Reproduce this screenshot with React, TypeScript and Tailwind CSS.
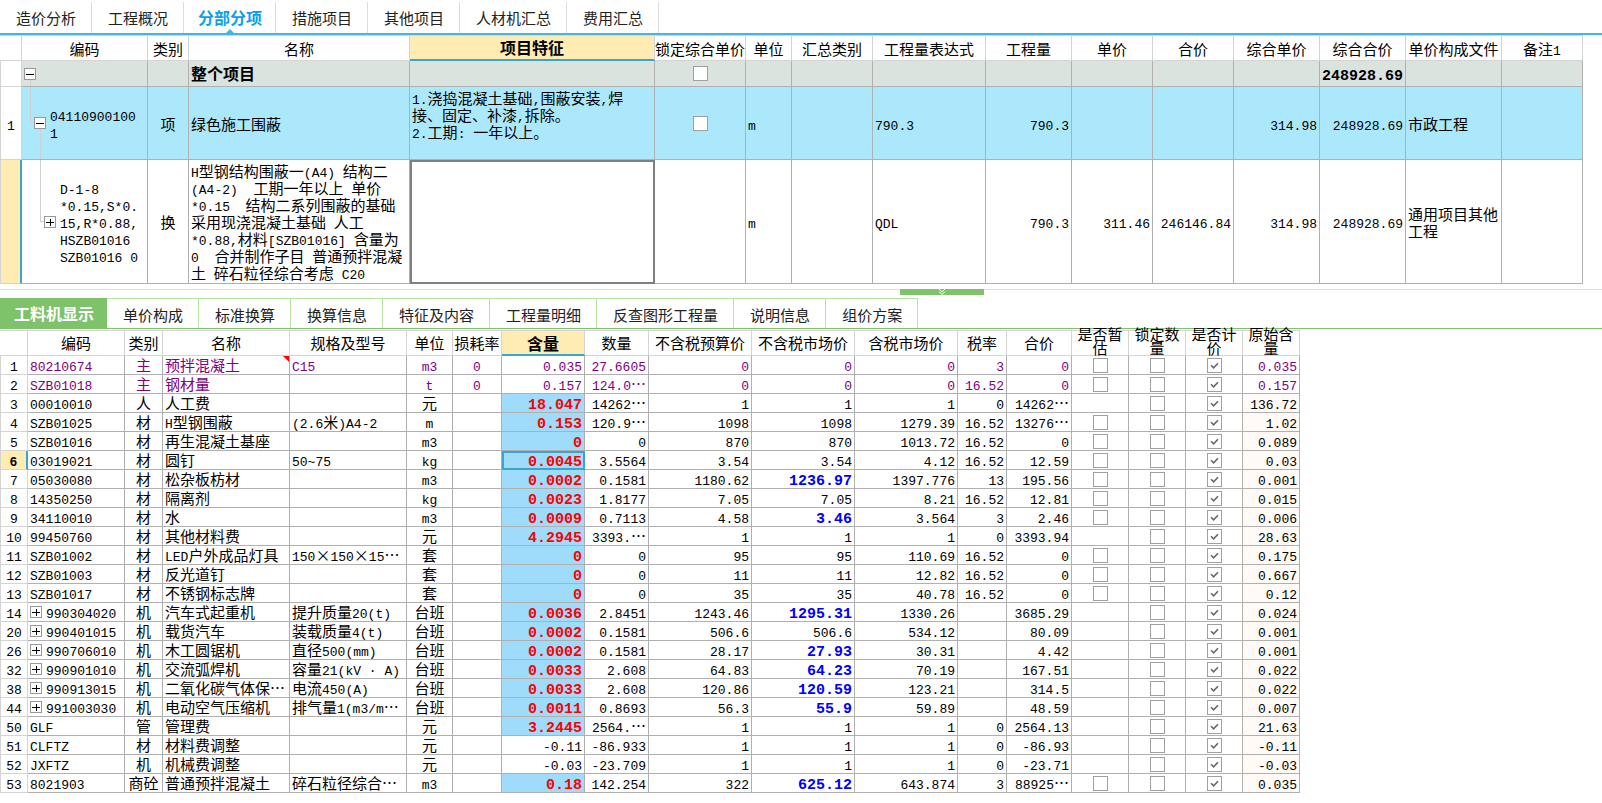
import React from 'react'
import clsx from 'clsx'

interface BillRow {
  code: string
  unit: string
  expression: string
  quantity: string
  unitPrice: string
  total: string
  compositePrice: string
  compositeTotal: string
  priceFile: string
}

interface MaterialRow {
  no: number
  code: string
  type: string
  name: string
  spec: string
  unit: string
  loss: string
  content: string
  quantity: string
  budgetPrice: string
  marketPrice: string
  taxedPrice: string
  taxRate: string
  total: string
  original: string
}

const topTabs = ['造价分析', '工程概况', '分部分项', '措施项目', '其他项目', '人材机汇总', '费用汇总']
const bottomTabs = ['工料机显示', '单价构成', '标准换算', '换算信息', '特征及内容', '工程量明细', '反查图形工程量', '说明信息', '组价方案']

const billHeaders = ['', '编码', '类别', '名称', '项目特征', '锁定综合单价', '单位', '汇总类别', '工程量表达式', '工程量', '单价', '合价', '综合单价', '综合合价', '单价构成文件', '备注1']
const billCols = ['w-[22px]', 'w-[126px]', 'w-[41px]', 'w-[221px]', 'w-[245px]', 'w-[91px]', 'w-[46px]', 'w-[81px]', 'w-[113px]', 'w-[86px]', 'w-[81px]', 'w-[81px]', 'w-[86px]', 'w-[86px]', 'w-[96px]', 'w-[81px]']

const materialHeaders = ['', '编码', '类别', '名称', '规格及型号', '单位', '损耗率', '含量', '数量', '不含税预算价', '不含税市场价', '含税市场价', '税率', '合价', '是否暂估', '锁定数量', '是否计价', '原始含量']
const materialCols = ['w-[28px]', 'w-[97px]', 'w-[38px]', 'w-[127px]', 'w-[117px]', 'w-[46px]', 'w-[49px]', 'w-[83px]', 'w-[64px]', 'w-[103px]', 'w-[103px]', 'w-[103px]', 'w-[49px]', 'w-[65px]', 'w-[57px]', 'w-[57px]', 'w-[57px]', 'w-[57px]']

const item: BillRow = {
  code: '04110900100\n1',
  unit: 'm',
  expression: '790.3',
  quantity: '790.3',
  unitPrice: '',
  total: '',
  compositePrice: '314.98',
  compositeTotal: '248928.69',
  priceFile: '市政工程',
}

const subItem: BillRow = {
  code: 'D-1-8\n*0.15,S*0.\n15,R*0.88,\nHSZB01016\nSZB01016 0',
  unit: 'm',
  expression: 'QDL',
  quantity: '790.3',
  unitPrice: '311.46',
  total: '246146.84',
  compositePrice: '314.98',
  compositeTotal: '248928.69',
  priceFile: '通用项目其他\n工程',
}

const featureText = '1.浇捣混凝土基础,围蔽安装,焊\n接、固定、补漆,拆除。\n2.工期: 一年以上。'
const subItemName =
  'H型钢结构围蔽一(A4) 结构二\n(A4-2)  工期一年以上 单价\n*0.15  结构二系列围蔽的基础\n采用现浇混凝土基础 人工\n*0.88,材料[SZB01016] 含量为\n0  合并制作子目 普通预拌混凝\n土 碎石粒径综合考虑 C20'

// no | code | type | name | spec | unit | loss | content | quantity | budget | market | taxed | rate | total | original
const source = `1|80210674|主|预拌混凝土|C15|m3|0|0.035|27.6605|0|0|0|3|0|0.035
2|SZB01018|主|钢材量||t|0|0.157|124.0…|0|0|0|16.52|0|0.157
3|00010010|人|人工费||元||18.047|14262…|1|1|1|0|14262…|136.72
4|SZB01025|材|H型钢围蔽|(2.6米)A4-2|m||0.153|120.9…|1098|1098|1279.39|16.52|13276…|1.02
5|SZB01016|材|再生混凝土基座||m3||0|0|870|870|1013.72|16.52|0|0.089
6|03019021|材|圆钉|50~75|kg||0.0045|3.5564|3.54|3.54|4.12|16.52|12.59|0.03
7|05030080|材|松杂板枋材||m3||0.0002|0.1581|1180.62|1236.97|1397.776|13|195.56|0.001
8|14350250|材|隔离剂||kg||0.0023|1.8177|7.05|7.05|8.21|16.52|12.81|0.015
9|34110010|材|水||m3||0.0009|0.7113|4.58|3.46|3.564|3|2.46|0.006
10|99450760|材|其他材料费||元||4.2945|3393.…|1|1|1|0|3393.94|28.63
11|SZB01002|材|LED户外成品灯具|150×150×15…|套||0|0|95|95|110.69|16.52|0|0.175
12|SZB01003|材|反光道钉||套||0|0|11|11|12.82|16.52|0|0.667
13|SZB01017|材|不锈钢标志牌||套||0|0|35|35|40.78|16.52|0|0.12
14|990304020|机|汽车式起重机|提升质量20(t)|台班||0.0036|2.8451|1243.46|1295.31|1330.26||3685.29|0.024
20|990401015|机|载货汽车|装载质量4(t)|台班||0.0002|0.1581|506.6|506.6|534.12||80.09|0.001
26|990706010|机|木工圆锯机|直径500(mm)|台班||0.0002|0.1581|28.17|27.93|30.31||4.42|0.001
32|990901010|机|交流弧焊机|容量21(kV · A)|台班||0.0033|2.608|64.83|64.23|70.19||167.51|0.022
38|990913015|机|二氧化碳气体保…|电流450(A)|台班||0.0033|2.608|120.86|120.59|123.21||314.5|0.022
44|991003030|机|电动空气压缩机|排气量1(m3/m…|台班||0.0011|0.8693|56.3|55.9|59.89||48.59|0.007
50|GLF|管|管理费||元||3.2445|2564.…|1|1|1|0|2564.13|21.63
51|CLFTZ|材|材料费调整||元||-0.11|-86.933|1|1|1|0|-86.93|-0.11
52|JXFTZ|机|机械费调整||元||-0.03|-23.709|1|1|1|0|-23.71|-0.03
53|8021903|商砼|普通预拌混凝土|碎石粒径综合…|m3||0.18|142.254|322|625.12|643.874|3|88925…|0.035`

const materials: MaterialRow[] = source.split('\n').map((line) => {
  const [no, code, type, name, spec, unit, loss, content, quantity, budgetPrice, marketPrice, taxedPrice, taxRate, total, original] = line.split('|')
  return { no: Number(no), code, type, name, spec, unit, loss, content, quantity, budgetPrice, marketPrice, taxedPrice, taxRate, total, original }
})

const SELECTED_ROW = 6
const expandable = [14, 20, 26, 32, 38, 44]
const noEstimate = [3, 10, 14, 20, 26, 32, 38, 44, 50, 51, 52]
const plainContent = [1, 2, 51, 52]
const adjustedPrice = [7, 9, 14, 26, 32, 38, 44, 53]

const MONO = "font-['Liberation_Mono','Noto_Sans_CJK_SC',monospace]"

// Latin runs use the half-width face, everything else the CJK one.
// Their line height is 0 so that the CJK text alone sets the row height.
// The ellipsis is boxed so that it keeps its centred CJK form after a Latin letter.
const Text: React.FC<{ children: string; bold?: boolean }> = ({ children, bold = false }) => (
  <>
    {children.split(/([\x20-\x7e·]+|…)/).map((run, index) => {
      if (run === '…') return <span key={index} className="inline-block leading-none">…</span>
      if (index % 2 === 0) return run
      return (
        <span key={index} className={clsx(MONO, 'leading-0', bold ? 'text-[15px]' : 'text-[13px]')}>
          {run}
        </span>
      )
    })}
  </>
)

const Check: React.FC<{ label: string; checked?: boolean }> = ({ label, checked = false }) => (
  <span className="relative mx-auto block h-[15px] w-[15px]">
    <input
      type="checkbox"
      aria-label={label}
      defaultChecked={checked}
      className="peer block h-[15px] w-[15px] appearance-none border border-[#a0a0a0] bg-white"
    />
    <svg
      viewBox="0 0 15 15"
      className="pointer-events-none absolute inset-0 hidden h-[15px] w-[15px] peer-checked:block"
      fill="none"
      stroke="#66667a"
      strokeWidth="1.6"
    >
      <path d="M4 7.2 6.6 9.8 11 5.2" />
    </svg>
  </span>
)

const Toggle: React.FC<{ open?: boolean; className?: string }> = ({ open = false, className }) => (
  <button
    type="button"
    aria-label={open ? '折叠' : '展开'}
    className={clsx('relative h-3 w-3 shrink-0 border border-[#999999] bg-white', className)}
  >
    <svg viewBox="0 0 10 10" className="block h-[10px] w-[10px]" stroke="#000" strokeWidth="1" shapeRendering="crispEdges">
      <path d="M1 5.5H9" />
      {!open && <path d="M5.5 2V9" />}
    </svg>
  </button>
)

const cell = 'border-r border-b border-[#b0b0b0] px-0.5 whitespace-pre'
const headCell = 'h-[26px] border-t border-r border-b border-[#d4d4d4] p-0 text-center font-normal'
const activeHead = 'h-[26px] border-t border-r border-b-2 border-t-[#d4d4d4] border-r-[#d4d4d4] border-b-[#3aa5d1] bg-[#ffecb3] p-0 text-center text-[16px] font-bold'
const rowHead = 'border-r border-b border-l border-[#d4d4d4] p-0 text-center font-normal'
const treeLine = 'absolute border-[#d0d0d0]'

const BillValues: React.FC<{ row: BillRow }> = ({ row }) => (
  <>
    <td className={cell}><Text>{row.unit}</Text></td>
    <td className={cell} />
    <td className={cell}><Text>{row.expression}</Text></td>
    {[row.quantity, row.unitPrice, row.total, row.compositePrice, row.compositeTotal].map((value, index) => (
      <td key={index} className={clsx(cell, 'text-right')}><Text>{value}</Text></td>
    ))}
    <td className={cell}>{row.priceFile}</td>
    <td className={cell} />
  </>
)

const BillTable: React.FC = () => (
  <table className="w-[1583px] table-fixed border-separate border-spacing-0 leading-[17px]">
    <colgroup>
      {billCols.map((width, index) => <col key={index} className={width} />)}
    </colgroup>
    <thead>
      <tr>
        {billHeaders.map((header) => (
          <th key={header} scope="col" className={clsx('whitespace-nowrap', header === '项目特征' ? activeHead : headCell)}>
            <Text>{header}</Text>
          </th>
        ))}
      </tr>
    </thead>
    <tbody>
      <tr className="h-[26px] bg-[#dae3de] text-[16px] font-bold">
        <th className={clsx(rowHead, 'bg-white')} />
        <td className={clsx(cell, 'relative')}>
          <span className={clsx(treeLine, 'bottom-0 left-2 h-2 border-l')} />
          <Toggle open className="block" />
        </td>
        <td className={cell} />
        <td className={cell}>整个项目</td>
        <td className={cell} />
        <td className={cell}><Check label="锁定综合单价" /></td>
        {[6, 7, 8, 9, 10, 11, 12].map((col) => <td key={col} className={cell} />)}
        <td className={clsx(cell, 'text-right')}><Text bold>248928.69</Text></td>
        <td className={cell} />
        <td className={cell} />
      </tr>
      <tr className="h-[73px] bg-[#ace8fb]">
        <th scope="row" className={clsx(rowHead, 'bg-white')}><Text>1</Text></th>
        <td className={clsx(cell, 'relative')}>
          <span className={clsx(treeLine, 'top-0 left-2 h-9 w-1 border-b border-l')} />
          <span className={clsx(treeLine, 'bottom-0 left-[18px] h-[30px] border-l')} />
          <div className="flex items-center gap-1 pl-2.5">
            <Toggle open />
            <span><Text>{item.code}</Text></span>
          </div>
        </td>
        <td className={clsx(cell, 'text-center')}>项</td>
        <td className={cell}>绿色施工围蔽</td>
        <td className={clsx(cell, 'pt-0.5 align-top')}><Text>{featureText}</Text></td>
        <td className={cell}><Check label="锁定综合单价" /></td>
        <BillValues row={item} />
      </tr>
      <tr className="h-[124px]">
        <th scope="row" className="border-r-2 border-b border-l border-r-[#3aa5d1] border-b-[#d4d4d4] border-l-[#d4d4d4] bg-[#ffecb3] p-0" />
        <td className={clsx(cell, 'relative')}>
          <span className={clsx(treeLine, 'top-0 left-[18px] h-[62px] w-1 border-b border-l')} />
          <div className="flex items-center gap-1 pl-5">
            <Toggle />
            <span><Text>{subItem.code}</Text></span>
          </div>
        </td>
        <td className={clsx(cell, 'text-center')}>换</td>
        <td className={cell}><Text>{subItemName}</Text></td>
        <td className={clsx(cell, 'outline-2 -outline-offset-2 outline-[#808080]')} />
        <td className={cell} />
        <BillValues row={subItem} />
      </tr>
    </tbody>
  </table>
)

const MaterialLine: React.FC<{ row: MaterialRow }> = ({ row }) => {
  const selected = row.no === SELECTED_ROW
  const main = row.type === '主'
  const highlighted = !plainContent.includes(row.no)
  const adjusted = adjustedPrice.includes(row.no)

  return (
    <tr className={clsx('h-[19px]', main && 'text-[#800080]')}>
      <th
        scope="row"
        className={clsx(
          'border-b border-l p-0 text-center text-black',
          selected
            ? 'border-r-2 border-r-[#3aa5d1] border-b-[#d4d4d4] border-l-[#d4d4d4] bg-[#ffecb3] font-bold'
            : 'border-r border-[#d4d4d4] font-normal'
        )}
      >
        <Text>{String(row.no)}</Text>
      </th>
      <td className={cell}>
        {expandable.includes(row.no) ? (
          <div className="flex items-center gap-1">
            <Toggle />
            <span><Text>{row.code}</Text></span>
          </div>
        ) : (
          <Text>{row.code}</Text>
        )}
      </td>
      <td className={clsx(cell, 'px-0 text-center')}>{row.type}</td>
      <td className={clsx(cell, 'relative')}>
        <Text>{row.name}</Text>
        {row.no === 1 && (
          <svg viewBox="0 0 6 6" className="absolute top-0 right-0 h-1.5 w-1.5" fill="#ff0000">
            <path d="M0 0H6V6Z" />
          </svg>
        )}
      </td>
      <td className={cell}><Text>{row.spec}</Text></td>
      <td className={clsx(cell, 'text-center')}><Text>{row.unit}</Text></td>
      <td className={clsx(cell, 'text-center')}><Text>{row.loss}</Text></td>
      <td
        className={clsx(
          cell,
          'text-right',
          highlighted && 'bg-[#9fdcfc] font-bold text-[#ff0000]',
          selected && 'outline-2 -outline-offset-2 outline-[#3aa5d1]'
        )}
      >
        <Text bold={highlighted}>{row.content}</Text>
      </td>
      <td className={clsx(cell, 'text-right')}><Text>{row.quantity}</Text></td>
      <td className={clsx(cell, 'text-right')}><Text>{row.budgetPrice}</Text></td>
      <td className={clsx(cell, 'text-right', adjusted && 'font-bold text-[#0000ff]')}>
        <Text bold={adjusted}>{row.marketPrice}</Text>
      </td>
      <td className={clsx(cell, 'text-right')}><Text>{row.taxedPrice}</Text></td>
      <td className={clsx(cell, 'text-right')}><Text>{row.taxRate}</Text></td>
      <td className={clsx(cell, 'text-right')}><Text>{row.total}</Text></td>
      <td className={cell}>{!noEstimate.includes(row.no) && <Check label="是否暂估" />}</td>
      <td className={cell}><Check label="锁定数量" /></td>
      <td className={cell}><Check label="是否计价" checked /></td>
      <td className={clsx(cell, 'text-right', !main && 'bg-[#fffaf5]')}><Text>{row.original}</Text></td>
    </tr>
  )
}

const MaterialTable: React.FC = () => (
  <table className="w-[1300px] table-fixed border-separate border-spacing-0 leading-[18px]">
    <colgroup>
      {materialCols.map((width, index) => <col key={index} className={width} />)}
    </colgroup>
    <thead>
      <tr>
        {materialHeaders.map((header, index) => (
          <th key={header} scope="col" className={header === '含量' ? activeHead : headCell}>
            {index > 13 ? (
              <div className="flex h-6 items-center justify-center pb-1 leading-[14px]">{header}</div>
            ) : (
              <span className="whitespace-nowrap">{header}</span>
            )}
          </th>
        ))}
      </tr>
    </thead>
    <tbody>
      {materials.map((row) => <MaterialLine key={row.no} row={row} />)}
    </tbody>
  </table>
)

const App: React.FC = () => {
  return (
    <div className="min-h-screen overflow-x-hidden bg-white font-['Noto_Sans_CJK_SC',sans-serif] text-[15px] text-black">
      <nav className="flex h-[35px] border-b-2 border-[#45b5e4] pt-0.5">
        {topTabs.map((tab) => {
          const active = tab === '分部分项'
          return (
            <button
              key={tab}
              type="button"
              className={clsx(
                'relative border-r border-[#dcdcdc] leading-[31px] whitespace-nowrap',
                active ? 'pr-[13px] pl-3.5 text-[16px] font-bold text-[#0aa0e8]' : 'pr-[15px] pl-4 text-[#222222]'
              )}
            >
              {tab}
              {active && (
                <svg viewBox="0 0 8 4" className="absolute bottom-0 left-1/2 h-1 w-2 -translate-x-1/2" fill="#45b5e4">
                  <path d="M0 4 4 0 8 4Z" />
                </svg>
              )}
            </button>
          )
        })}
      </nav>

      <BillTable />

      <div className="relative mt-[5px] h-[9px] border-t border-[#e0e0e0]">
        <button type="button" aria-label="收起" className="absolute -top-px left-[900px] flex h-1.5 w-[84px] justify-center bg-[#7ec26a]">
          <svg viewBox="0 0 8 6" className="h-1.5 w-2" fill="none" stroke="#ffffff">
            <path d="M1 0 4 3 7 0M1 2.5 4 5.5 7 2.5" />
          </svg>
        </button>
      </div>

      <nav className="mb-px flex h-[31px] border-b border-[#7ec26a]">
        {bottomTabs.map((tab, index) => (
          <button
            key={tab}
            type="button"
            className={clsx(
              'whitespace-nowrap',
              index === 0
                ? 'bg-[#7ec26a] pr-[13px] pl-3.5 text-[16px] font-bold text-white'
                : 'border-t border-r border-[#b4e6a0] pt-1 pr-[15px] pl-4 text-[#222222]'
            )}
          >
            {tab}
          </button>
        ))}
      </nav>

      <MaterialTable />
    </div>
  )
}

export default App
